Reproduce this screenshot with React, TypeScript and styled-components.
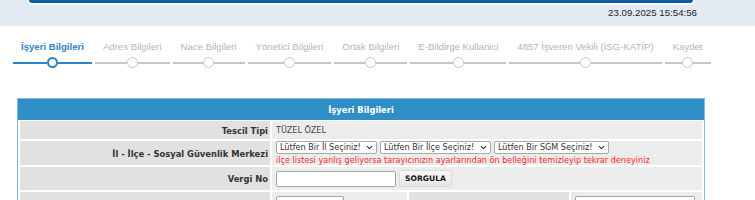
import React from 'react';
import styled, { createGlobalStyle } from 'styled-components';
import { ChevronDown } from 'lucide-react';

const GlobalStyle = createGlobalStyle`
  html, body {
    margin: 0;
    padding: 0;
    background: #fff;
    overflow: hidden;
  }
  body {
    font-family: 'DejaVu Sans Condensed', 'DejaVu Sans', Verdana, sans-serif;
  }
`;

const TopBand = styled.header`
  display: flex;
  flex-direction: column;
  height: 26px;
  background: #e3eaf4;
`;

const Banner = styled.div`
  height: 3px;
  margin: 0 60px 0 27px;
  background: #0d5ca6;
  border: 2px solid #fff;
  border-top: none;
  border-radius: 0 0 5px 5px;
`;

const Clock = styled.div`
  align-self: flex-end;
  margin: 2px 58px 0 0;
  font: 9.7px 'Liberation Sans', Arial, sans-serif;
  line-height: 11px;
  color: #1e1e1e;
`;

const Steps = styled.ol`
  display: flex;
  gap: 3px;
  margin: 15px 0 0 13px;
  padding: 0;
  list-style: none;
`;

const Step = styled.li<{ $active?: boolean }>`
  display: flex;
  flex-direction: column;
  align-items: center;
  padding: 0 8px;
  font-family: 'Liberation Sans', Arial, sans-serif;
  font-size: 9.6px;
  font-weight: ${(p) => (p.$active ? 700 : 400)};
  line-height: 11px;
  white-space: nowrap;
  color: ${(p) => (p.$active ? '#2d84c4' : '#b5b5b5')};
`;

const Track = styled.div<{ $active?: boolean }>`
  display: flex;
  align-items: center;
  align-self: stretch;
  margin: 5px -8px 0;
  height: 11px;
  color: ${(p) => (p.$active ? '#2d84c4' : '#c6c6c6')};
`;

const Line = styled.span`
  flex: 1;
  height: 2px;
  background: currentColor;
`;

const Dot = styled.span<{ $active?: boolean }>`
  box-sizing: border-box;
  width: 11px;
  height: 11px;
  border: ${(p) => (p.$active ? 2 : 1.5)}px solid currentColor;
  border-radius: 50%;
  background: #fff;
`;

const Panel = styled.section`
  width: 688px;
  margin: 30px 0 0 17px;
  border: 1px solid #84bbe0;
  border-bottom: none;
  box-sizing: border-box;
`;

const PanelTitle = styled.h2`
  margin: 0;
  height: 21px;
  background: #2f8ec6;
  color: #fff;
  font-size: 9.3px;
  font-weight: 700;
  line-height: 21px;
  text-align: center;
`;

const Form = styled.table`
  width: 100%;
  table-layout: fixed;
  border-collapse: separate;
  border-spacing: 2px;
  margin-top: -1px;
  font-size: 9px;
`;

const Label = styled.th<{ $h?: number }>`
  height: ${(p) => p.$h ?? 24}px;
  padding: 0 2px 0 4px;
  background: #e1e1e1;
  color: #333;
  font-size: 9.3px;
  font-weight: 700;
  text-align: right;
  white-space: nowrap;
`;

const Value = styled.td`
  padding: 0 4px;
  background: #ececec;
  color: #444;
  vertical-align: middle;
`;

const SelectRow = styled.div`
  display: flex;
  gap: 3px;
  margin-bottom: 1px;
`;

const SelectWrap = styled.span`
  position: relative;
  display: inline-flex;
`;

const Select = styled.select`
  appearance: none;
  height: 13px;
  padding: 0 15px 0 3px;
  border: 1px solid #a8a8a8;
  border-radius: 2px;
  background: #fff;
  color: #333;
  font-family: inherit;
  font-size: 9px;
  line-height: 11px;
`;

const Caret = styled(ChevronDown)`
  position: absolute;
  right: 3px;
  top: 2px;
  width: 9px;
  height: 9px;
  stroke-width: 3;
  color: #333;
  pointer-events: none;
`;

const Warning = styled.div`
  color: #f0282e;
  line-height: 10px;
  white-space: nowrap;
`;

const Inline = styled.div`
  display: flex;
  align-items: center;
  gap: 3px;
`;

const Input = styled.input<{ $w: number }>`
  box-sizing: border-box;
  width: ${(p) => p.$w}px;
  height: 16px;
  padding: 0 3px;
  border: 1px solid #a4a4a4;
  border-radius: 2px;
  background: #fff;
  font-family: inherit;
  font-size: 9px;
`;

const Button = styled.button`
  height: 17px;
  padding: 0 5px;
  border: 1px solid #dadada;
  border-radius: 2px;
  background: linear-gradient(#f7f7f7, #e6e6e6);
  color: #111;
  font-family: 'DejaVu Sans', Verdana, sans-serif;
  font-size: 7.6px;
  font-weight: 700;
`;

const steps = [
  'İşyeri Bilgileri',
  'Adres Bilgileri',
  'Nace Bilgileri',
  'Yönetici Bilgileri',
  'Ortak Bilgileri',
  'E-Bildirge Kullanici',
  '4857 İşveren Vekili (İSG-KATİP)',
  'Kaydet',
];

const Dropdown = ({ text }: { text: string }) => (
  <SelectWrap>
    <Select defaultValue="">
      <option value="">{text}</option>
    </Select>
    <Caret />
  </SelectWrap>
);

export default function App() {
  return (
    <>
      <GlobalStyle />
      <TopBand>
        <Banner />
        <Clock>23.09.2025 15:54:56</Clock>
      </TopBand>

      <Steps>
        {steps.map((s, i) => (
          <Step key={s} $active={i === 0}>
            {s}
            <Track $active={i === 0}>
              <Line />
              <Dot $active={i === 0} />
              <Line />
            </Track>
          </Step>
        ))}
      </Steps>

      <Panel>
        <PanelTitle>İşyeri Bilgileri</PanelTitle>
        <Form>
          <colgroup>
            <col style={{ width: 250 }} />
            <col style={{ width: 135 }} />
            <col style={{ width: 160 }} />
            <col />
          </colgroup>
          <tbody>
            <tr>
              <Label $h={18}>Tescil Tipi</Label>
              <Value colSpan={3}>TÜZEL ÖZEL</Value>
            </tr>
            <tr>
              <Label>İl - İlçe - Sosyal Güvenlik Merkezi</Label>
              <Value colSpan={3}>
                <SelectRow>
                  <Dropdown text="Lütfen Bir İl Seçiniz!" />
                  <Dropdown text="Lütfen Bir İlçe Seçiniz!" />
                  <Dropdown text="Lütfen Bir SGM Seçiniz!" />
                </SelectRow>
                <Warning>
                  ilçe listesi yanlış geliyorsa tarayıcınızın ayarlarından ön belleğini
                  temizleyip tekrar deneyiniz
                </Warning>
              </Value>
            </tr>
            <tr>
              <Label $h={23}>Vergi No</Label>
              <Value colSpan={3}>
                <Inline>
                  <Input $w={120} />
                  <Button>SORGULA</Button>
                </Inline>
              </Value>
            </tr>
            <tr>
              <Label $h={18}>Sigortalı Çalıştırmaya Başlanacak Tarih</Label>
              <Value>
                <Input $w={68} />
              </Value>
              <Label>Yapılan İşin Niteliği</Label>
              <Value>
                <Input $w={120} />
              </Value>
            </tr>
          </tbody>
        </Form>
      </Panel>
    </>
  );
}
